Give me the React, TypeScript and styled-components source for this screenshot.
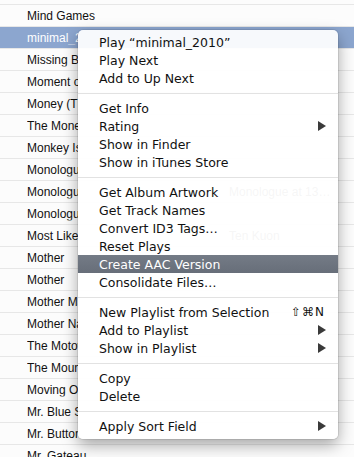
import React from 'react';
import styled, { createGlobalStyle } from 'styled-components';

const GlobalStyle = createGlobalStyle`
  html, body {
    margin: 0;
    padding: 0;
    background: #ffffff;
    overflow: hidden;
  }
`;

type Track = { name: string; album?: string };

const tracks: Track[] = [
  { name: 'Mind Fields' },
  { name: 'Mind Games' },
  { name: 'minimal_2010' },
  { name: 'Missing Bodies' },
  { name: 'Moment of Surrender' },
  { name: 'Money (That’s What I Want)' },
  { name: 'The Money Will Roll Right In' },
  { name: 'Monkey Island' },
  { name: 'Monologue 1' },
  { name: 'Monologue 2', album: 'Monologue at 13…' },
  { name: 'Monologue 3' },
  { name: 'Most Likely You Go Your Way', album: 'Ten Kuon' },
  { name: 'Mother' },
  { name: 'Mother' },
  { name: 'Mother Mary' },
  { name: 'Mother Nature’s Son' },
  { name: 'The Motown Song' },
  { name: 'The Mountain' },
  { name: 'Moving On' },
  { name: 'Mr. Blue Sky' },
  { name: 'Mr. Buttons' },
  { name: 'Mr. Gateau' },
];

// rows in this range sit behind the open menu
const isCovered = (i: number) => i >= 2 && i <= 20;

type MenuEntry =
  | { kind: 'sep' }
  | { kind: 'item'; label: string; submenu?: boolean; shortcut?: string; active?: boolean };

const menu: MenuEntry[] = [
  { kind: 'item', label: 'Play “minimal_2010”' },
  { kind: 'item', label: 'Play Next' },
  { kind: 'item', label: 'Add to Up Next' },
  { kind: 'sep' },
  { kind: 'item', label: 'Get Info' },
  { kind: 'item', label: 'Rating', submenu: true },
  { kind: 'item', label: 'Show in Finder' },
  { kind: 'item', label: 'Show in iTunes Store' },
  { kind: 'sep' },
  { kind: 'item', label: 'Get Album Artwork' },
  { kind: 'item', label: 'Get Track Names' },
  { kind: 'item', label: 'Convert ID3 Tags…' },
  { kind: 'item', label: 'Reset Plays' },
  { kind: 'item', label: 'Create AAC Version', active: true },
  { kind: 'item', label: 'Consolidate Files…' },
  { kind: 'sep' },
  { kind: 'item', label: 'New Playlist from Selection', shortcut: '⇧⌘N' },
  { kind: 'item', label: 'Add to Playlist', submenu: true },
  { kind: 'item', label: 'Show in Playlist', submenu: true },
  { kind: 'sep' },
  { kind: 'item', label: 'Copy' },
  { kind: 'item', label: 'Delete' },
  { kind: 'sep' },
  { kind: 'item', label: 'Apply Sort Field', submenu: true },
];

export default function App() {
  return (
    <>
      <GlobalStyle />
      <Screen>
        <TrackList>
          {tracks.map((t, i) => (
            <Row key={i} $selected={i === 2}>
              <NameCell $covered={isCovered(i)}>{t.name}</NameCell>
              <AlbumCell>{t.album ?? ''}</AlbumCell>
            </Row>
          ))}
        </TrackList>
        <Menu>
          {menu.map((m, i) =>
            m.kind === 'sep' ? (
              <Separator key={i} />
            ) : (
              <Item key={i} $active={!!m.active}>
                <Label>{m.label}</Label>
                {m.shortcut && <Shortcut>{m.shortcut}</Shortcut>}
                {m.submenu && <Arrow />}
              </Item>
            )
          )}
        </Menu>
      </Screen>
    </>
  );
}

const Screen = styled.div`
  position: relative;
  width: 354px;
  height: 457px;
  overflow: hidden;
  background: #ffffff;
`;

const TrackList = styled.div`
  display: flex;
  flex-direction: column;
  margin-top: -17px;
`;

const Row = styled.div<{ $selected: boolean }>`
  display: flex;
  align-items: center;
  height: 22px;
  box-sizing: border-box;
  padding-left: 27px;
  border-bottom: 1px solid #e7e7e7;
  background: ${(p) => (p.$selected ? '#8ca6cf' : '#fcfcfc')};
  color: ${(p) => (p.$selected ? '#ffffff' : '#111111')};
  font-family: 'Liberation Sans', Arial, sans-serif;
  font-size: 12px;
`;

const NameCell = styled.span<{ $covered: boolean }>`
  width: 198px;
  white-space: nowrap;
  overflow: hidden;
  clip-path: ${(p) => (p.$covered ? 'inset(0 147px 0 0)' : 'none')};
`;

const AlbumCell = styled.span`
  white-space: nowrap;
  padding-left: 4px;
  color: #7a7a7a;
`;

const Menu = styled.div`
  position: absolute;
  left: 78px;
  top: 30px;
  width: 260px;
  box-sizing: border-box;
  padding: 3px 0 4px;
  background: rgba(255, 255, 255, 0.93);
  border-radius: 5px;
  box-shadow: 0 0 0 1px rgba(0, 0, 0, 0.08), 0 6px 16px rgba(0, 0, 0, 0.35);
  font-family: 'DejaVu Sans', sans-serif;
  font-size: 12.5px;
  color: #111111;
`;

const Item = styled.div<{ $active: boolean }>`
  display: flex;
  align-items: center;
  height: 18px;
  padding: 0 11px 0 21px;
  background: ${(p) => (p.$active ? 'linear-gradient(#747b86, #676e79)' : 'transparent')};
  color: ${(p) => (p.$active ? '#ffffff' : '#111111')};
`;

const Label = styled.span`
  flex: 1;
  white-space: nowrap;
`;

const Shortcut = styled.span`
  font-size: 12px;
  letter-spacing: 1px;
  margin-right: 2px;
`;

const Arrow = styled.span`
  width: 0;
  height: 0;
  margin-right: 1px;
  border-top: 5px solid transparent;
  border-bottom: 5px solid transparent;
  border-left: 8px solid #3a3a3a;
`;

const Separator = styled.div`
  height: 1px;
  margin: 6px 0 5px;
  background: #e2e2e2;
`;
